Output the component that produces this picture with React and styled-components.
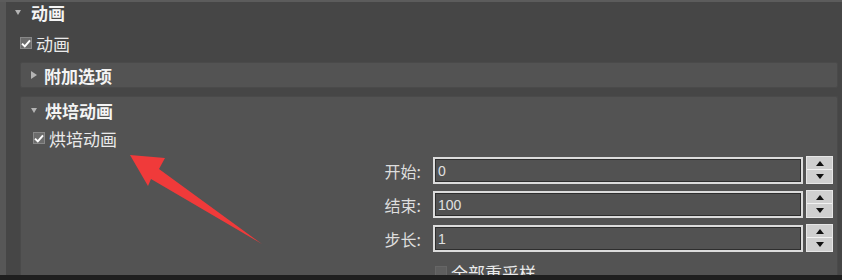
import { Fragment } from "react";
import styled, { createGlobalStyle } from "styled-components";

const GlobalStyle = createGlobalStyle`
  body {
    margin: 0;
    background: #464646;
  }
`;

const Root = styled.div`
  position: relative;
  width: 842px;
  height: 280px;
  overflow: hidden;
  background: #464646;
  border-top: 2px solid #5c5c5c;
  box-sizing: border-box;
  display: flex;
  flex-direction: column;
  font-family: "Noto Sans CJK SC", "Noto Sans", sans-serif;
  color: #ececec;
`;

const Body = styled.div`
  flex: 1;
  display: flex;
  border-left: 6px solid #575757;
  padding-right: 4px;
  min-height: 0;
`;

const Content = styled.div`
  flex: 1;
  display: flex;
  flex-direction: column;
  min-height: 0;
`;

const Header = styled.div`
  height: ${(p) => p.$h || 24}px;
  display: flex;
  align-items: center;
  gap: ${(p) => p.$gap || 11}px;
  padding-left: ${(p) => p.$pad || 0}px;
  flex-shrink: 0;
`;

const Triangle = styled.span`
  width: 0;
  height: 0;
  ${(p) =>
    p.$open
      ? `border-left: 3.5px solid transparent;
         border-right: 3.5px solid transparent;
         border-top: 5px solid #b4b4b4;`
      : `border-top: 4px solid transparent;
         border-bottom: 4px solid transparent;
         border-left: 6px solid #b4b4b4;`}
`;

const Title = styled.span`
  font-size: 17px;
  font-weight: 700;
  color: #f4f4f4;
  line-height: 1;
`;

const CheckRow = styled.label`
  height: 22px;
  display: flex;
  align-items: center;
  gap: 4px;
  margin-top: ${(p) => p.$mt || 0}px;
  padding-left: ${(p) => p.$pad || 0}px;
  font-size: 17px;
  line-height: 1;
  color: #eaeaea;
  flex-shrink: 0;
`;

const Box = styled.span`
  width: 12px;
  height: 12px;
  box-sizing: border-box;
  background: ${(p) => (p.$dim ? "#5e5e5e" : "#6c6c6c")};
  border: 1px solid ${(p) => (p.$dim ? "#666" : "#888")};
  display: flex;
  align-items: center;
  justify-content: center;
`;

const Panel = styled.div`
  margin-top: ${(p) => p.$mt || 0}px;
  margin-left: 14px;
  background: #535353;
  border: 1px solid #4a4a4a;
  border-radius: 2px;
  box-sizing: border-box;
  flex-shrink: 0;
  ${(p) => (p.$grow ? "flex: 1; border-bottom: none;" : "")}
  display: flex;
  flex-direction: column;
`;

const Form = styled.div`
  display: grid;
  grid-template-columns: 61px 373px 27px;
  row-gap: 7px;
  margin-top: 8px;
  margin-left: 351px;
`;

const FieldLabel = styled.span`
  font-size: 16px;
  color: #dedede;
  display: flex;
  align-items: center;
  justify-content: flex-end;
  padding-right: 12px;
  height: 27px;
  white-space: nowrap;
`;

const Input = styled.div`
  height: 27px;
  box-sizing: border-box;
  border: 2px solid #dcdcdc;
  box-shadow: inset 0 0 0 1px #2e2e2e;
  background: #525252;
  display: flex;
  align-items: center;
  padding-left: 3px;
  margin-right: 3px;
  font-family: "Liberation Sans", Arial, sans-serif;
  font-size: 14px;
  color: #e0e0e0;
`;

const Spinner = styled.div`
  height: 28px;
  margin-top: -1px;
  box-sizing: border-box;
  border: 1px solid #e6e6e6;
  background: #cfcfcf;
  display: grid;
  grid-template-rows: 1fr 1fr;
`;

const SpinHalf = styled.div`
  display: flex;
  align-items: center;
  justify-content: center;
  border-bottom: ${(p) => (p.$top ? "1px solid #f2f2f2" : "none")};
`;

const Arrow = styled.span`
  width: 0;
  height: 0;
  border-left: 4px solid transparent;
  border-right: 4px solid transparent;
  ${(p) =>
    p.$up
      ? "border-bottom: 5px solid #111;"
      : "border-top: 5px solid #111;"}
`;

const BottomBar = styled.div`
  height: 5px;
  background: #1f1f1f;
  flex-shrink: 0;
`;

const Overlay = styled.svg`
  position: absolute;
  left: 0;
  top: 0;
  pointer-events: none;
`;

const Check = () => (
  <svg width="10" height="9" viewBox="0 0 10 9">
    <path d="M1 4.6 L3.8 7.4 L9 1.4" fill="none" stroke="#fff" strokeWidth="2" />
  </svg>
);

const fields = [
  { label: "开始:", value: "0" },
  { label: "结束:", value: "100" },
  { label: "步长:", value: "1" },
];

export default function App() {
  return (
    <>
      <GlobalStyle />
      <Root>
        <Body>
          <Content>
            <Header $h={21} $pad={9} $gap={10}>
              <Triangle $open />
              <Title>动画</Title>
            </Header>
            <CheckRow $mt={9} $pad={14}>
              <Box>
                <Check />
              </Box>
              动画
            </CheckRow>
            <Panel $mt={8}>
              <Header $h={24} $pad={10} $gap={7}>
                <Triangle />
                <Title>附加选项</Title>
              </Header>
            </Panel>
            <Panel $mt={8} $grow>
              <Header $h={27} $pad={10} $gap={8}>
                <Triangle $open />
                <Title>烘培动画</Title>
              </Header>
              <CheckRow $mt={3} $pad={12}>
                <Box>
                  <Check />
                </Box>
                烘培动画
              </CheckRow>
              <Form>
                {fields.map((f) => (
                  <Fragment key={f.label}>
                    <FieldLabel>{f.label}</FieldLabel>
                    <Input>{f.value}</Input>
                    <Spinner>
                      <SpinHalf $top>
                        <Arrow $up />
                      </SpinHalf>
                      <SpinHalf>
                        <Arrow />
                      </SpinHalf>
                    </Spinner>
                  </Fragment>
                ))}
              </Form>
              <CheckRow $mt={9} $pad={414}>
                <Box $dim />
                全部重采样
              </CheckRow>
            </Panel>
          </Content>
        </Body>
        <BottomBar />
        <Overlay width="842" height="280" viewBox="0 0 842 280">
          <polygon
            points="130,153 165,156 159,167 262,242 151,177 148,184"
            fill="#f03a3a"
          />
        </Overlay>
      </Root>
    </>
  );
}
